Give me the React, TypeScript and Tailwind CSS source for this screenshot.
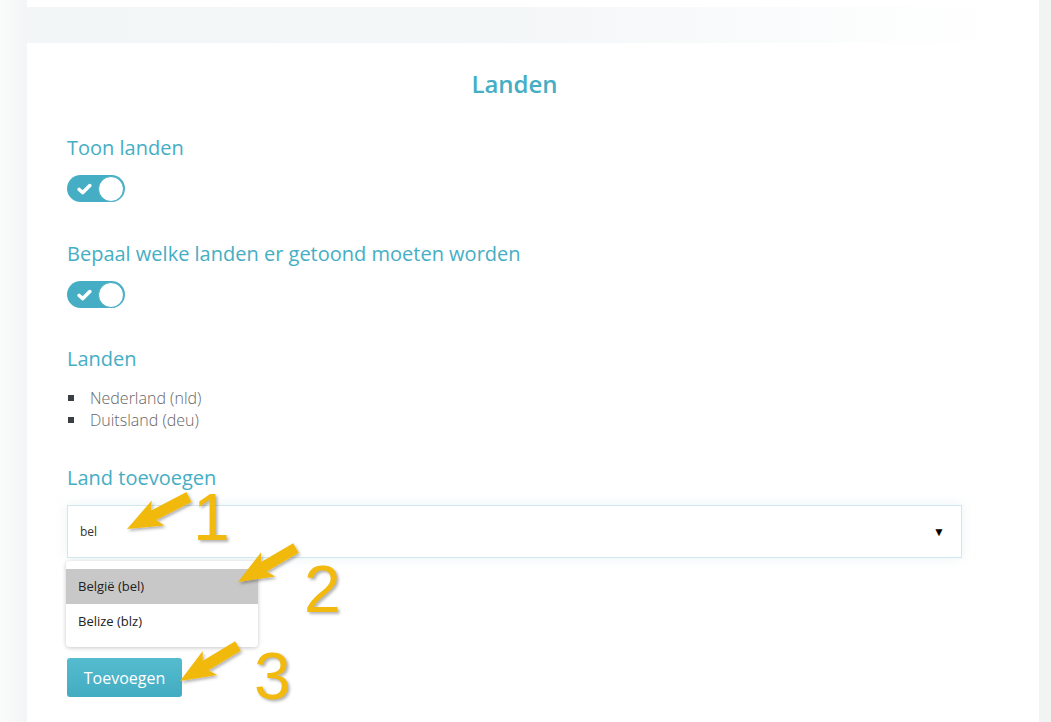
import React from "react";

type Pt = { x: number; y: number };

// builds a block arrow from tail to tip
function arrowPoints(tail: Pt, tip: Pt): string {
  const dx = tip.x - tail.x;
  const dy = tip.y - tail.y;
  const len = Math.hypot(dx, dy);
  const ux = dx / len;
  const uy = dy / len;
  const nx = -uy;
  const ny = ux;
  const headLen = 30;
  const headHalf = 14;
  const shaftHalf = 5.5;
  const bx = tip.x - ux * headLen;
  const by = tip.y - uy * headLen;
  const pts: [number, number][] = [
    [tail.x + nx * shaftHalf, tail.y + ny * shaftHalf],
    [bx + nx * shaftHalf, by + ny * shaftHalf],
    [bx + nx * headHalf - ux * 5, by + ny * headHalf - uy * 5],
    [tip.x, tip.y],
    [bx - nx * headHalf - ux * 5, by - ny * headHalf - uy * 5],
    [bx - nx * shaftHalf, by - ny * shaftHalf],
    [tail.x - nx * shaftHalf, tail.y - ny * shaftHalf],
  ];
  return pts.map((p) => p.map((v) => v.toFixed(1)).join(",")).join(" ");
}

const arrows: { tail: Pt; tip: Pt }[] = [
  { tail: { x: 189, y: 497 }, tip: { x: 127, y: 529 } },
  { tail: { x: 296, y: 548 }, tip: { x: 238, y: 582 } },
  { tail: { x: 238, y: 646 }, tip: { x: 180, y: 681 } },
];

const Toggle: React.FC = () => (
  <div className="w-[58px] h-[27px] rounded-full bg-[#45aec4] flex items-center justify-between pl-[10px] pr-[1px]">
    <svg width="15" height="12" viewBox="0 0 15 12">
      <path d="M2.2 6.5 L5.8 9.6 L12.8 2.6" fill="none" stroke="white" strokeWidth="3.6" strokeLinecap="round" strokeLinejoin="round" />
    </svg>
    <div className="w-[26px] h-[26px] rounded-full bg-white border border-[#45aec4]" />
  </div>
);

const Label: React.FC<{ children: React.ReactNode }> = ({ children }) => (
  <div className="text-[20px] leading-[28px] text-[#45aec4]">{children}</div>
);

export default function App() {
  return (
    <div
      className="relative h-[722px] w-[1051px] overflow-hidden bg-[#f5f6f7] flex"
      style={{ fontFamily: '"Open Sans", sans-serif' }}
    >
      <div className="w-[27px] bg-gradient-to-r from-[#fbfbfb] to-[#f3f5f6]" />
      <div className="w-[1012px] bg-white flex flex-col">
        <div className="h-[7px]" />
        <div className="h-[36px] w-[973px] bg-gradient-to-r from-[#f3f6f7] via-[#f4f7f8] to-white" />
        <div className="pl-[40px] pr-[77px] flex flex-col">
          <h1 className="mt-[25px] text-center text-[24px] leading-[32px] font-semibold text-[#45aec4]">
            Landen
          </h1>

          <div className="mt-[34px]">
            <Label>Toon landen</Label>
          </div>
          <div className="mt-[13px]">
            <Toggle />
          </div>

          <div className="mt-[38px]">
            <Label>Bepaal welke landen er getoond moeten worden</Label>
          </div>
          <div className="mt-[13px]">
            <Toggle />
          </div>

          <div className="mt-[37px]">
            <Label>Landen</Label>
          </div>
          <ul className="mt-[14px] text-[16px] leading-[22px] font-light text-[#666]">
            {["Nederland (nld)", "Duitsland (deu)"].map((c) => (
              <li key={c} className="flex items-center">
                <span className="ml-[1px] w-[6px] h-[6px] bg-[#3a3f44]" />
                <span className="ml-[16px]">{c}</span>
              </li>
            ))}
          </ul>

          <div className="mt-[33px]">
            <Label>Land toevoegen</Label>
          </div>
          <div className="mt-[13px] h-[53px] border border-[#cfe8ef] shadow-[0_0_12px_rgba(200,220,225,0.35)] flex items-center justify-between pl-[12px] pr-[16px]">
            <span className="text-[12px] text-[#333]">bel</span>
            <span className="text-[12px] text-black">▼</span>
          </div>
          <div className="mt-[3px] -ml-[1px] w-[192px] rounded-[4px] bg-white shadow-[0_1px_4px_rgba(0,0,0,0.22)] py-[8px]">
            <div className="h-[35px] bg-[#c8c8c8] flex items-center pl-[12px] text-[13px] text-[#222]">
              België (bel)
            </div>
            <div className="h-[35px] flex items-center pl-[12px] text-[13px] text-[#222]">
              Belize (blz)
            </div>
          </div>
          <div className="mt-[11px]">
            <button className="w-[115px] h-[39px] rounded-[3px] bg-gradient-to-b from-[#55bccf] to-[#42acc1] text-white text-[16px]">
              Toevoegen
            </button>
          </div>
        </div>
      </div>
      <div className="flex-1 bg-[#f2f3f3]" />

      {/* annotation arrows */}
      <svg className="absolute left-0 top-0 pointer-events-none" width="1051" height="722">
        <defs>
          <filter id="sh" x="-20%" y="-20%" width="140%" height="140%">
            <feDropShadow dx="1.5" dy="2" stdDeviation="1.5" floodColor="#000" floodOpacity="0.3" />
          </filter>
        </defs>
        {arrows.map((a, i) => (
          <polygon key={i} points={arrowPoints(a.tail, a.tip)} fill="#f2b90f" filter="url(#sh)" />
        ))}
      </svg>
      {[
        { n: "1", left: 193, top: 484 },
        { n: "2", left: 304, top: 556 },
        { n: "3", left: 254, top: 643 },
      ].map((d) => (
        <span
          key={d.n}
          className="absolute text-[66px] leading-none text-[#f2b90f] [text-shadow:2px_2px_3px_rgba(0,0,0,0.3)]"
          style={{ left: d.left, top: d.top, fontFamily: '"Liberation Sans", Arial, sans-serif' }}
        >
          {d.n}
        </span>
      ))}
    </div>
  );
}
